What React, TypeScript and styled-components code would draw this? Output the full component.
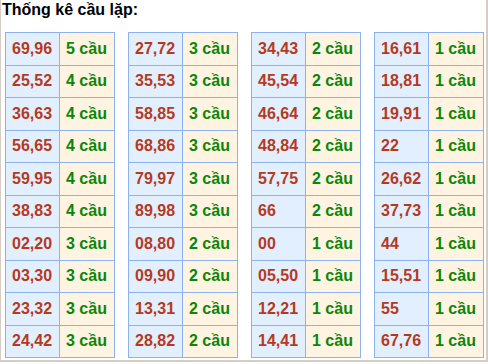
import { Fragment } from 'react';
import styled, { createGlobalStyle } from 'styled-components';

const data: [string, number][][] = [
  [
    ['69,96', 5], ['25,52', 4], ['36,63', 4], ['56,65', 4], ['59,95', 4],
    ['38,83', 4], ['02,20', 3], ['03,30', 3], ['23,32', 3], ['24,42', 3],
  ],
  [
    ['27,72', 3], ['35,53', 3], ['58,85', 3], ['68,86', 3], ['79,97', 3],
    ['89,98', 3], ['08,80', 2], ['09,90', 2], ['13,31', 2], ['28,82', 2],
  ],
  [
    ['34,43', 2], ['45,54', 2], ['46,64', 2], ['48,84', 2], ['57,75', 2],
    ['66', 2], ['00', 1], ['05,50', 1], ['12,21', 1], ['14,41', 1],
  ],
  [
    ['16,61', 1], ['18,81', 1], ['19,91', 1], ['22', 1], ['26,62', 1],
    ['37,73', 1], ['44', 1], ['15,51', 1], ['55', 1], ['67,76', 1],
  ],
];

const GlobalStyle = createGlobalStyle`
  body {
    margin: 0;
    background: #fff;
    font-family: "Liberation Sans", Arial, sans-serif;
  }
`;

const SBox = styled.div`
  width: 485px;
  height: 360px;
  border-left: 1px solid #d5cdc4;
  border-right: 2px solid #d5cdc4;
  border-bottom: 2px solid #d5cdc4;
  overflow: hidden;
`;

const STitle = styled.div`
  font-size: 16px;
  font-weight: bold;
  color: #000;
  height: 32px;
  padding-left: 1px;
  line-height: 20px;
`;

const SRow = styled.div`
  display: flex;
  gap: 13px;
  padding-left: 4px;
`;

const STable = styled.div`
  display: grid;
  grid-template-columns: 54px 55px;
  grid-auto-rows: 32.5px;
  border-top: 1px solid #8db2f0;
  border-left: 1px solid #8db2f0;
`;

const SCell = styled.div<{ $kind: 'num' | 'count' }>`
  display: flex;
  align-items: center;
  padding-left: 6px;
  box-sizing: border-box;
  border-right: 1px solid #8db2f0;
  border-bottom: 1px solid #8db2f0;
  font-size: 16px;
  font-weight: bold;
  background: ${(p) => (p.$kind === 'num' ? '#e2efff' : '#fff4e2')};
  color: ${(p) => (p.$kind === 'num' ? '#b53a1d' : '#0a860a')};
`;

export default function App() {
  return (
    <>
      <GlobalStyle />
      <SBox>
        <STitle>Thống kê cầu lặp:</STitle>
        <SRow>
          {data.map((table, i) => (
            <STable key={i}>
              {table.map(([pair, count]) => (
                <Fragment key={pair}>
                  <SCell $kind="num">{pair}</SCell>
                  <SCell $kind="count">{count} cầu</SCell>
                </Fragment>
              ))}
            </STable>
          ))}
        </SRow>
      </SBox>
    </>
  );
}
